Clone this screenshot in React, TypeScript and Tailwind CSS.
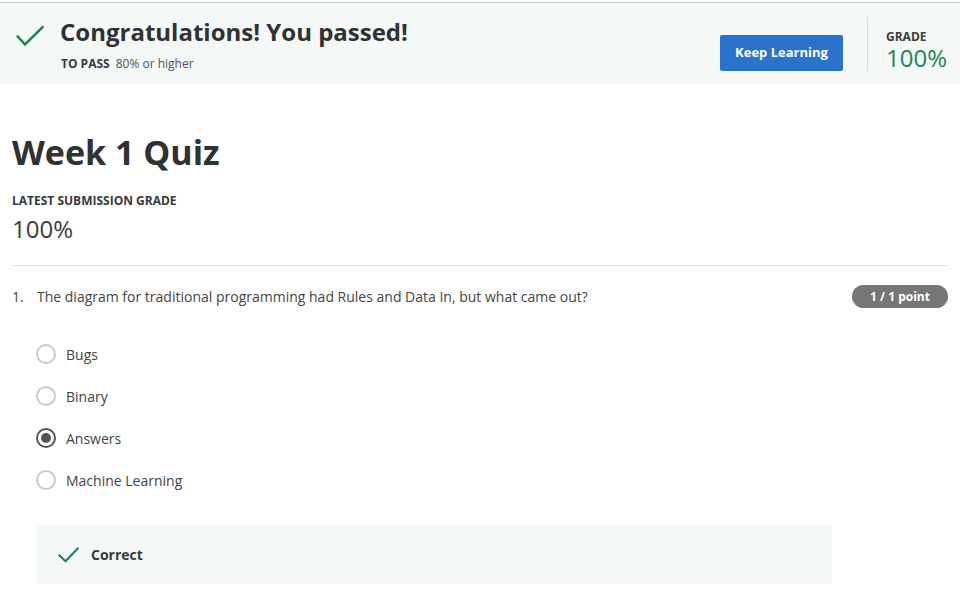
import React from 'react';

const options = ['Bugs', 'Binary', 'Answers', 'Machine Learning'];

const Check: React.FC<{ w: number; h: number; points: string; stroke?: number }> = ({ w, h, points, stroke = 2.5 }) => (
    <svg width={w} height={h} viewBox={`0 0 ${w} ${h}`} fill="none">
        <polyline points={points} stroke="#1f8354" strokeWidth={stroke} strokeLinecap="square" strokeLinejoin="miter" />
    </svg>
);

const Radio: React.FC<{ checked: boolean }> = ({ checked }) =>
    checked ? (
        <span className="w-[20px] h-[20px] rounded-full border-2 border-[#555] flex items-center justify-center shrink-0">
            <span className="w-[10px] h-[10px] rounded-full bg-[#555]" />
        </span>
    ) : (
        <span className="w-[20px] h-[20px] rounded-full border-2 border-[#cacaca] shrink-0" />
    );

export default function App() {
    return (
        <div className="w-[960px] min-h-[610px] bg-white font-['Open_Sans',sans-serif] text-[#373a3c]">
            {/* pass banner */}
            <div className="mt-[2px] h-[82px] border-t border-[#c8c8c8] bg-[#f4f8f7] flex items-start pl-[16px] pr-[13px]">
                <div className="mt-[22px]">
                    <Check w={28} h={22} points="1.8,11.5 9,19.5 26.5,2.2" />
                </div>
                <div className="ml-[16px] mt-[13px]">
                    <div className="text-[24px] leading-[32px] font-bold text-[#2f3133]">Congratulations! You passed!</div>
                    <div className="mt-[8px] text-[12px] leading-[16px] pl-[1px]">
                        <span className="font-bold">TO PASS</span>
                        <span className="ml-[6px] text-[#555]">80% or higher</span>
                    </div>
                </div>
                <div className="ml-auto flex items-start">
                    <button className="mt-[32px] w-[123px] h-[36px] rounded-[2px] bg-[#2a73cc] text-white text-[13px] font-bold">
                        Keep Learning
                    </button>
                    <div className="ml-[24px] mt-[14px] w-px h-[54px] bg-[#dcdcdc]" />
                    <div className="ml-[18px] mt-[27px]">
                        <div className="text-[12px] leading-[14px] font-bold text-[#3c3c3c]">GRADE</div>
                        <div className="text-[24px] leading-[28px] text-[#1f8354]">100%</div>
                    </div>
                </div>
            </div>

            <div className="px-[12px]">
                <h1 className="mt-[47px] text-[34px] leading-[42px] font-bold text-[#2f3133]">Week 1 Quiz</h1>
                <div className="mt-[20px] text-[12px] leading-[16px] font-bold">LATEST SUBMISSION GRADE</div>
                <div className="mt-[4px] text-[24px] leading-[32px] text-[#3c3c3c]">100%</div>
                <div className="mt-[20px] h-px bg-[#e0e0e0]" />

                {/* question */}
                <div className="mt-[19px] flex items-center justify-between">
                    <div className="flex text-[14px] leading-[20px] text-[#444]">
                        <span className="w-[25px]">1.</span>
                        <span>The diagram for traditional programming had Rules and Data In, but what came out?</span>
                    </div>
                    <span className="h-[23px] w-[96px] rounded-full bg-[#767676] text-white text-[12px] font-bold flex items-center justify-center">
                        1 / 1 point
                    </span>
                </div>

                <div className="mt-[25px] ml-[24px]">
                    {options.map(opt => (
                        <div key={opt} className="h-[42px] flex items-center">
                            <Radio checked={opt === 'Answers'} />
                            <span className="ml-[10px] text-[14px] text-[#444]">{opt}</span>
                        </div>
                    ))}
                </div>

                <div className="mt-[24px] ml-[25px] w-[795px] h-[59px] bg-[#f4f8f7] flex items-center pl-[21px]">
                    <Check w={21} h={16} points="1.5,8.5 7.5,14.2 19.8,1.5" stroke={2.2} />
                    <span className="ml-[12px] text-[14px] font-bold text-[#373a3c]">Correct</span>
                </div>
            </div>
        </div>
    );
}
